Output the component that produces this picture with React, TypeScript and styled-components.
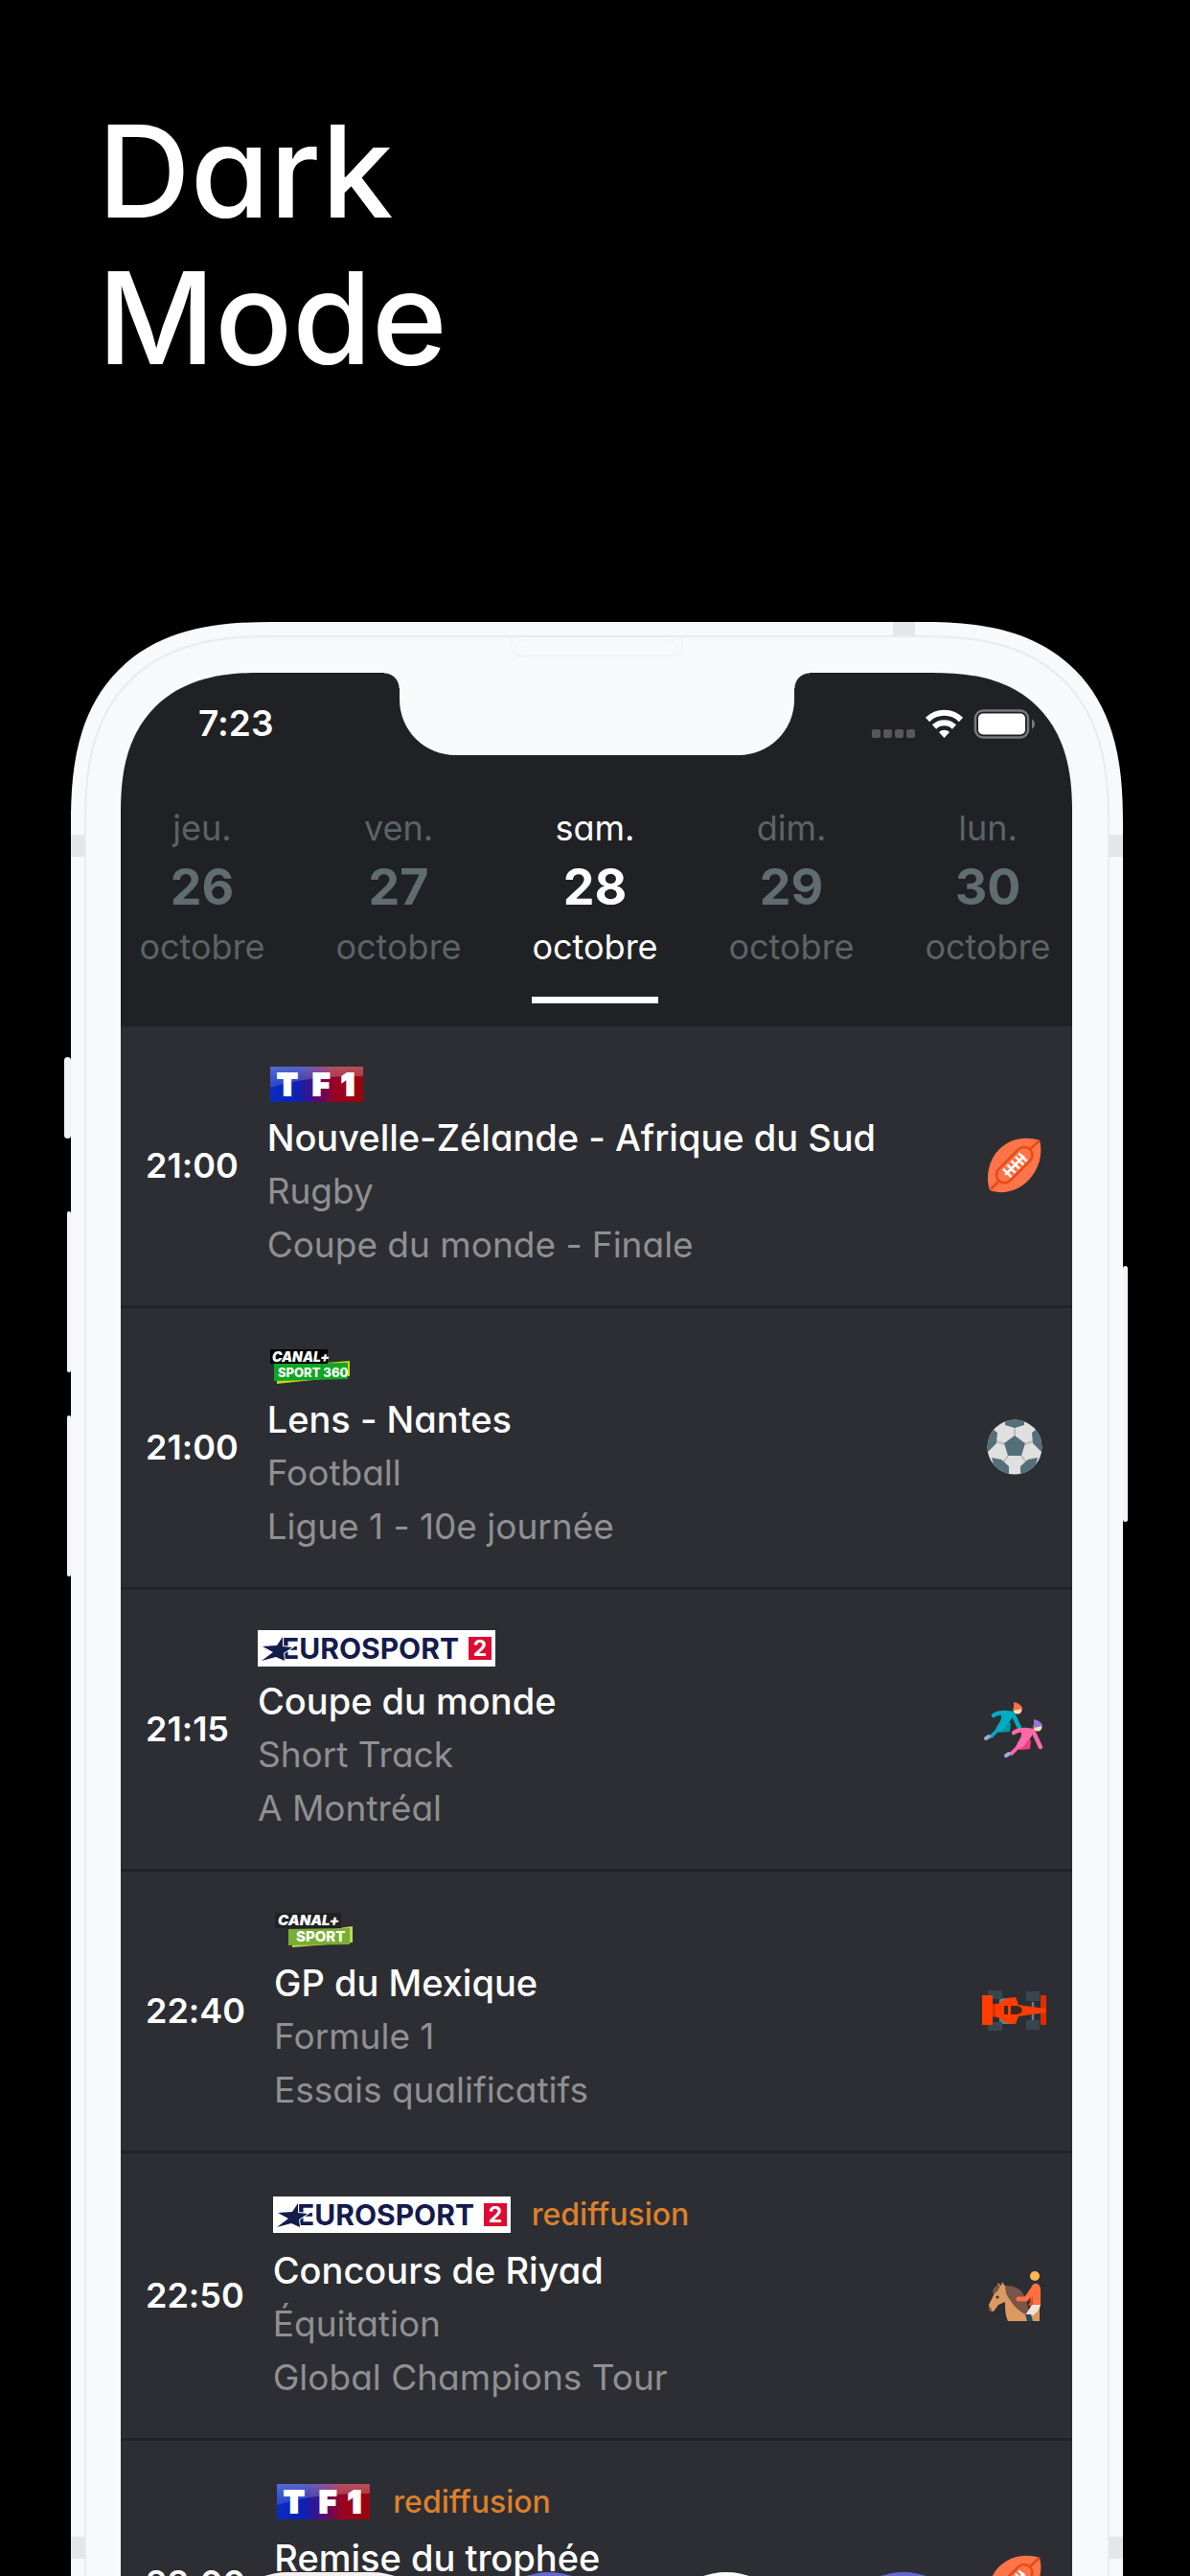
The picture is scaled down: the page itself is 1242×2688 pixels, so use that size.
/*node-modules*/
import React from 'react';
import styled, {createGlobalStyle} from 'styled-components';

type Day = {
    name: string;
    date: number;
    month: string;
}

type Channel = 'tf1' | 'canalSport360' | 'canalSport' | 'eurosport2';
type Sport = 'rugby' | 'football' | 'shortTrack' | 'formula1' | 'riding';

type Broadcast = {
    time: string;
    channel: Channel;
    title: string;
    sport: string;
    details: string;
    icon: Sport;
    isReplay?: boolean;
}

const days: Day[] = [
    {name: 'jeu.', date: 26, month: 'octobre'},
    {name: 'ven.', date: 27, month: 'octobre'},
    {name: 'sam.', date: 28, month: 'octobre'},
    {name: 'dim.', date: 29, month: 'octobre'},
    {name: 'lun.', date: 30, month: 'octobre'},
];

const broadcasts: Broadcast[] = [
    {time: '21:00', channel: 'tf1', title: 'Nouvelle-Zélande - Afrique du Sud', sport: 'Rugby', details: 'Coupe du monde - Finale', icon: 'rugby'},
    {time: '21:00', channel: 'canalSport360', title: 'Lens - Nantes', sport: 'Football', details: 'Ligue 1 - 10e journée', icon: 'football'},
    {time: '21:15', channel: 'eurosport2', title: 'Coupe du monde', sport: 'Short Track', details: 'A Montréal', icon: 'shortTrack'},
    {time: '22:40', channel: 'canalSport', title: 'GP du Mexique', sport: 'Formule 1', details: 'Essais qualificatifs', icon: 'formula1'},
    {time: '22:50', channel: 'eurosport2', title: 'Concours de Riyad', sport: 'Équitation', details: 'Global Champions Tour', icon: 'riding', isReplay: true},
    {time: '23:00', channel: 'tf1', title: 'Remise du trophée', sport: 'Rugby', details: 'Coupe du monde', icon: 'rugby', isReplay: true},
];

const GlobalStyle = createGlobalStyle`
  * {
    box-sizing: border-box;
  }

  body {
    margin: 0;
    background-color: #000000;
    font-family: Inter, "Liberation Sans", sans-serif;
    font-feature-settings: "cv11", "calt" 0;
  }

  h1, h2, p, ul {
    margin: 0;
    padding: 0;
  }
`;

const Page = styled.main`
  height: 100vh;
  overflow: hidden;
`;

const Heading = styled.h1`
  padding: 102px 102px 241px;
  font-weight: 500;
  font-size: 134px;
  line-height: 153px;
  color: #FFFFFF;
`;

const Device = styled.div`
  display: flex;
  padding: 0 65px 0 67px;
`;

const ButtonRail = styled.div<{$side: 'left' | 'right'}>`
  flex: none;
  display: flex;
  flex-direction: column;
  align-items: ${({$side}) => $side === 'left' ? 'flex-end' : 'flex-start'};
  width: ${({$side}) => $side === 'left' ? 7 : 5}px;
`;

const SideButton = styled.div<{$space: number; $length: number; $depth: number}>`
  width: ${({$depth}) => $depth}px;
  height: ${({$length}) => $length}px;
  margin-top: ${({$space}) => $space}px;
  border-radius: 4px;
  background-color: #F3F4F6;
`;

/* the grey marks in the background are the antenna bands of the metal edge */
const Phone = styled.div`
  position: relative;
  flex: 1;
  min-width: 0;
  min-height: 2400px;
  padding: 53px 53px 0 52px;
  border-radius: 176px 176px 0 0;
  background:
    linear-gradient(#E5E6E7, #E5E6E7) right 217px top 0 / 23px 15px no-repeat,
    linear-gradient(#E5E6E7, #E5E6E7) left 0 top 222px / 15px 23px no-repeat,
    linear-gradient(#E5E6E7, #E5E6E7) right 0 top 222px / 15px 23px no-repeat,
    linear-gradient(#E5E6E7, #E5E6E7) left 0 top 1998px / 15px 23px no-repeat,
    linear-gradient(#E5E6E7, #E5E6E7) right 0 top 1998px / 15px 23px no-repeat,
    #F8F9FB;

  @supports (corner-shape: superellipse(1.3)) {
    border-radius: 210px 210px 0 0;
    corner-shape: superellipse(1.35);
  }
`;

const Bezel = styled.div`
  position: absolute;
  inset: 14px 14px 0 14px;
  display: flex;
  justify-content: center;
  align-items: flex-start;
  border: 2px solid #E9EBED;
  border-bottom: 0;
  border-radius: 162px 162px 0 0;

  @supports (corner-shape: superellipse(1.3)) {
    border-radius: 196px 196px 0 0;
    corner-shape: superellipse(1.35);
  }
`;

const Speaker = styled.div`
  width: 180px;
  height: 21px;
  padding: 2px 4px;
  border: 2px solid #F2F3F5;
  border-top: 0;
  border-radius: 0 0 12px 12px;

  &::after {
    content: "";
    display: block;
    height: 15px;
    border: 1px solid #F2F3F5;
    border-radius: 8px;
  }
`;

const Screen = styled.div`
  position: relative;
  overflow: hidden;
  border-radius: 126px 126px 0 0;
  background-color: #202124;

  @supports (corner-shape: superellipse(1.3)) {
    border-radius: 146px 146px 0 0;
    corner-shape: superellipse(1.3);
  }
`;

const StatusBar = styled.div`
  display: grid;
  grid-template-columns: minmax(0, 1fr) 412px minmax(0, 1fr);
  height: 106px;
`;

const StatusSide = styled.div<{$end?: boolean}>`
  display: flex;
  align-items: center;
  justify-content: ${({$end}) => $end ? 'flex-end' : 'flex-start'};
  padding: ${({$end}) => $end ? '0 38px 0 0' : '0 0 0 81px'};
  font-weight: 600;
  font-size: 37px;
  line-height: 44px;
  color: #FFFFFF;

  svg {
    flex: none;
  }
`;

const Notch = styled.div`
  position: relative;
  height: 86px;
  border-radius: 0 0 58px 58px;
  background-color: #F8F9FB;

  &::before, &::after {
    content: "";
    position: absolute;
    top: 0;
    width: 16px;
    height: 16px;
  }

  &::before {
    right: 100%;
    background: radial-gradient(circle at 0 100%, transparent 15px, #F8F9FB 16px);
  }

  &::after {
    left: 100%;
    background: radial-gradient(circle at 100% 100%, transparent 15px, #F8F9FB 16px);
  }
`;

const DayTabs = styled.nav`
  display: flex;
  justify-content: space-between;
  padding: 28px 22px 24px 19px;
`;

const DayTab = styled.button<{$active: boolean}>`
  width: 132px;
  padding: 0 0 24px;
  border: 0;
  border-bottom: 7px solid ${({$active}) => $active ? '#FFFFFF' : 'transparent'};
  background: none;
  font-family: inherit;
  font-feature-settings: inherit;
  font-size: 36px;
  line-height: 56px;
  white-space: nowrap;
  color: ${({$active}) => $active ? '#FFFFFF' : '#5A6467'};

  span, strong {
    display: block;
  }

  strong {
    font-weight: 700;
    font-size: 52px;
    line-height: 68px;
    color: ${({$active}) => $active ? '#FFFFFF' : '#5F6C70'};
  }
`;

const BroadcastList = styled.ul`
  list-style: none;
`;

const BroadcastRow = styled.li`
  display: flex;
  align-items: center;
  gap: 30px;
  padding: 33px 26px 35px;
  background-color: #2D2E33;

  & + & {
    border-top: 3px solid #222327;
  }

  > time {
    font-weight: 600;
    font-size: 36px;
    line-height: 56px;
    color: #FFFFFF;
  }

  > svg {
    flex: none;
  }
`;

const BroadcastInfo = styled.div`
  flex: 1;
  min-width: 0;
  font-size: 37px;
  line-height: 56px;

  h2 {
    font-weight: 500;
    font-size: 38px;
    line-height: 56px;
    color: #FFFFFF;
  }

  p {
    color: #8F9092;
  }
`;

const ChannelLine = styled.div<{$tall: boolean}>`
  display: flex;
  align-items: center;
  gap: 22px;
  height: ${({$tall}) => $tall ? 61 : 55}px;

  svg {
    display: block;
  }

  span {
    font-weight: 500;
    font-size: 32px;
    color: #DD802B;
  }
`;

const QuickFilters = styled.div`
  position: absolute;
  top: 1982px;
  left: 0;
  right: 0;
  display: flex;
  gap: 37px;
  padding-left: 100px;
`;

const QuickFilter = styled.button<{$color: string; $wide?: boolean}>`
  width: ${({$wide}) => $wide ? 236 : 148}px;
  height: 148px;
  border: 0;
  border-radius: 74px;
  background-color: ${({$color}) => $color};
`;

const StatusIcons = () => (
    <svg width="172" height="32" viewBox="0 0 172 32" aria-hidden="true">
        <g fill="#57565B">
            <rect x="1" y="22" width="9" height="9" rx="2"/>
            <rect x="13" y="22" width="9" height="9" rx="2"/>
            <rect x="25" y="22" width="9" height="9" rx="2"/>
            <rect x="37" y="22" width="9" height="9" rx="2"/>
        </g>
        <g fill="none" stroke="#FFFFFF" strokeWidth="6">
            <path d="M59 12a25 25 0 0 1 35 0"/>
            <path d="M66 19.500a15 15 0 0 1 21 0"/>
        </g>
        <path d="M76.500 31l-5.500-6a8 8 0 0 1 11 0z" fill="#FFFFFF"/>
        <rect x="109" y="2.500" width="55" height="28" rx="8" fill="none" stroke="#77787B" strokeWidth="2.500"/>
        <rect x="112" y="5.500" width="49" height="22" rx="5" fill="#FFFFFF"/>
        <path d="M168 11.500c4 2 4 8 0 10z" fill="#77787B"/>
    </svg>
);

const Tf1Logo = () => (
    <svg width="102" height="38" viewBox="0 0 102 38" role="img" aria-label="TF1">
        <defs>
            <linearGradient id="tf1-base">
                <stop offset="0" stopColor="#0A2BC4"/>
                <stop offset=".3" stopColor="#0D22B0"/>
                <stop offset=".5" stopColor="#520C78"/>
                <stop offset=".7" stopColor="#99041F"/>
                <stop offset="1" stopColor="#97050D"/>
            </linearGradient>
            <linearGradient id="tf1-shine" x2="0" y2="1">
                <stop offset="0" stopColor="#FFFFFF" stopOpacity=".3"/>
                <stop offset="1" stopColor="#FFFFFF" stopOpacity=".12"/>
            </linearGradient>
        </defs>
        <rect x="3" width="97" height="37" fill="url(#tf1-base)"/>
        <path d="M3 0h97v10C62 10 30 13 3 22z" fill="url(#tf1-shine)"/>
        <g fill="#FFFFFF" stroke="#FFFFFF" strokeWidth="2" fontWeight="900" fontSize="31" textAnchor="middle">
            <text x="21" y="30">T</text>
            <text x="56" y="30">F</text>
            <text x="84" y="30">1</text>
        </g>
    </svg>
);

const CanalSport360Logo = () => (
    <svg width="88" height="36" viewBox="0 0 88 36" role="img" aria-label="Canal+ Sport 360">
        <path d="M61 14l25-2v16l-76 8v-5z" fill="#C3D70F"/>
        <path d="M7 15l77-1v17L7 33z" fill="#10A624"/>
        <rect x="3" width="60" height="15" fill="#000000"/>
        <text x="5" y="13" fill="#FFFFFF" fontWeight="900" fontStyle="italic" fontSize="14">CANAL+</text>
        <text x="11" y="29" fill="#FFFFFF" fontWeight="800" fontSize="13">SPORT 360</text>
    </svg>
);

const CanalSportLogo = () => (
    <svg width="88" height="38" viewBox="0 0 88 38" role="img" aria-label="Canal+ Sport">
        <path d="M68 17l14-2v17l-63 5v-5z" fill="#C5D65B"/>
        <path d="M15 18l64-1v17l-64 1z" fill="#78AE32"/>
        <rect x="1" y="1" width="69" height="16" fill="#202124"/>
        <text x="4" y="14" fill="#FFFFFF" fontWeight="900" fontStyle="italic" fontSize="15">CANAL+</text>
        <text x="23" y="31" fill="#FFFFFF" fontWeight="800" fontSize="15">SPORT</text>
    </svg>
);

const Eurosport2Logo = () => (
    <svg width="248" height="38" viewBox="0 0 248 38" role="img" aria-label="Eurosport 2">
        <rect width="248" height="38" fill="#FFFFFF"/>
        <text x="25" y="30" fill="#141B4D" fontWeight="700" fontSize="30">EUROSPORT</text>
        <path
            d="M26 7l-6 9-15 1 11 6-12 9 15-4 9 4-1-8 9-6-10-1z"
            fill="#141B4D"
            stroke="#FFFFFF"
            strokeWidth="2"
            paintOrder="stroke"
        />
        <rect x="220" y="7" width="24" height="24" fill="#DE0A33"/>
        <text x="232" y="27" fill="#FFFFFF" fontWeight="700" fontSize="23" textAnchor="middle">2</text>
    </svg>
);

const RugbyIcon = () => (
    <svg width="68" height="68" viewBox="0 0 68 68" role="img" aria-label="Rugby">
        <path d="M8 60C3 46 7 28 18 17S46 3 60 8c4 14-1 31-12 42S22 65 8 60z" fill="#FF7448"/>
        <g stroke="#E64A19" strokeWidth="2.500" fill="none">
            <path d="M9 59l8-8M50 17l10-9"/>
            <rect x="11" y="25" width="46" height="17" rx="8.500" transform="rotate(-45 34 34)"/>
        </g>
        <g stroke="#FFFFFF" strokeWidth="2.500" transform="rotate(-45 34 34)">
            <path d="M20 34h28M23 28v12M29 28v12M35 28v12M41 28v12M46 28v12"/>
        </g>
    </svg>
);

const FootballIcon = () => (
    <svg width="68" height="68" viewBox="0 0 68 68" role="img" aria-label="Football">
        <defs>
            <clipPath id="ball">
                <circle cx="34" cy="34" r="28.500"/>
            </clipPath>
        </defs>
        <circle cx="34" cy="34" r="28.500" fill="#E0E0E0"/>
        <g clipPath="url(#ball)">
            <path d="M34 23V10M23.500 31L12 27M44.500 31L56 27M27 43l-8 11M41 43l8 11" stroke="#BDBDBD" strokeWidth="2"/>
            <path
                d="M34 22l11 8-4 13H27l-4-13zM24 5h20v6l-10 3-10-3zM4 22l8-6 4 3-1 11-9 9-4-2zM64 22l-8-6-4 3 1 11 9 9 4-2zM10 45l10 2 8 7v10H15zM58 45l-10 2-8 7v10h13z"
                fill="#546E7A"
            />
        </g>
    </svg>
);

const Skater = ({suit, shade, hat}: {suit: string; shade: string; hat: string}) => (
    <g>
        <path d="M17 24l7-7 3 6-1 8-12 1z" fill={shade}/>
        <path
            d="M9 14c4-3 8-3 12-3l8 1 8 17"
            fill="none"
            stroke={suit}
            strokeWidth="4.500"
            strokeLinecap="round"
            strokeLinejoin="round"
        />
        <path d="M17 10h11c3 5-1 9-4 12-3 4-5 8-10 9l-7 7-3-2c3-4 6-5 8-9 2-5 4-6 5-10z" fill={suit}/>
        <circle cx="34" cy="8" r="4.500" fill="#FFE0B2"/>
        <path d="M30 9V0c5 1 9 4 9 7z" fill={hat}/>
        <path d="M1 38l3-2" stroke="#9FA8DA" strokeWidth="4" strokeLinecap="round"/>
    </g>
);

const ShortTrackIcon = () => (
    <svg width="68" height="68" viewBox="0 0 68 68" role="img" aria-label="Short Track">
        <g transform="translate(3 6)">
            <Skater suit="#00ACC1" shade="#0097A7" hat="#FF7043"/>
        </g>
        <g transform="translate(24 24)">
            <Skater suit="#FF69A8" shade="#EC407A" hat="#9575CD"/>
        </g>
    </svg>
);

const Formula1Icon = () => (
    <svg width="68" height="68" viewBox="0 0 68 68" role="img" aria-label="Formule 1">
        <path d="M18 21h14v27H18z" fill="#607D8B"/>
        <path d="M53 25v20" stroke="#607D8B" strokeWidth="2.500"/>
        <path d="M6 13h15v9H6zM6 46h15v9H6zM46 14h14v10H46zM46 44h14v10H46z" fill="#37474F"/>
        <path d="M61 18h6v31h-6z" fill="#DD2C00"/>
        <path d="M10 28l6-1 10-6 9-1 3 8 29 4v4l-29 4-3 8-9-1-10-6-6-1z" fill="#FF3D00"/>
        <path d="M0 18h11v31H0z" fill="#FF3D00"/>
        <path d="M11 27h3v13h-3z" fill="#DD2C00"/>
        <path d="M23 29h4v9h-4zM30 29h5c9 0 9 9 0 9h-5z" fill="#3E2723"/>
    </svg>
);

const RidingIcon = () => (
    <svg width="68" height="68" viewBox="0 0 68 68" role="img" aria-label="Équitation">
        <path
            d="M17 25l-1-4 4 3 1-4 4 6c3 6 6 12 12 18l9 6 14-4v15H27c-3-7-3-13-3-20l-7 3-5 7-4-1-1-6 5-10c1-4 2-7 5-9z"
            fill="#DB9A62"
        />
        <path d="M11 30c1-4 4-7 8-6l-3 6-4 3zM24 24c12 0 19 5 22 15l3 13-4 2C37 50 30 42 25 32z" fill="#795548"/>
        <circle cx="16" cy="36" r="1.500" fill="#3E2723"/>
        <path d="M7 46l3 2-1 3-2-1z" fill="#795548"/>
        <path d="M51 27c1-7 9-7 10 0v18H50z" fill="#FF7043"/>
        <path d="M53 28l-7 10h-8" fill="none" stroke="#FF7043" strokeWidth="5" strokeLinecap="round" strokeLinejoin="round"/>
        <path d="M48 45l5-10v10z" fill="#DD4A1F"/>
        <path d="M52 44h9c-1 5-4 8-8 11h-8z" fill="#EFE3D3"/>
        <path d="M45 54h6l2 7h-6z" fill="#1F4A5B"/>
        <circle cx="55" cy="14" r="5" fill="#FFB74D"/>
    </svg>
);

const channelLogos: Record<Channel, React.FC> = {
    tf1: Tf1Logo,
    canalSport360: CanalSport360Logo,
    canalSport: CanalSportLogo,
    eurosport2: Eurosport2Logo,
};

const sportIcons: Record<Sport, React.FC> = {
    rugby: RugbyIcon,
    football: FootballIcon,
    shortTrack: ShortTrackIcon,
    formula1: Formula1Icon,
    riding: RidingIcon,
};

const BroadcastItem = ({broadcast}: {broadcast: Broadcast}) => {
    const Logo = channelLogos[broadcast.channel];
    const SportIcon = sportIcons[broadcast.icon];

    return (
        <BroadcastRow>
            <time>{broadcast.time}</time>
            <BroadcastInfo>
                <ChannelLine $tall={!!broadcast.isReplay}>
                    <Logo/>
                    {broadcast.isReplay && <span>rediffusion</span>}
                </ChannelLine>
                <h2>{broadcast.title}</h2>
                <p>{broadcast.sport}</p>
                <p>{broadcast.details}</p>
            </BroadcastInfo>
            <SportIcon/>
        </BroadcastRow>
    );
};

const App = () => {
    const [activeDate, setActiveDate] = React.useState(28);

    return (
        <Page>
            <GlobalStyle/>
            <Heading>Dark<br/>Mode</Heading>
            <Device>
                <ButtonRail $side="left">
                    <SideButton $space={454} $length={85} $depth={7}/>
                    <SideButton $space={76} $length={168} $depth={4}/>
                    <SideButton $space={45} $length={168} $depth={4}/>
                </ButtonRail>
                <Phone>
                    <Bezel>
                        <Speaker/>
                    </Bezel>
                    <Screen>
                        <StatusBar>
                            <StatusSide>
                                <time>7:23</time>
                            </StatusSide>
                            <Notch/>
                            <StatusSide $end>
                                <StatusIcons/>
                            </StatusSide>
                        </StatusBar>
                        <DayTabs>
                            {days.map((day) => (
                                <DayTab key={day.date} $active={day.date === activeDate} onClick={() => setActiveDate(day.date)}>
                                    <span>{day.name}</span>
                                    <strong>{day.date}</strong>
                                    <span>{day.month}</span>
                                </DayTab>
                            ))}
                        </DayTabs>
                        <BroadcastList>
                            {broadcasts.map((broadcast) => (
                                <BroadcastItem key={broadcast.title} broadcast={broadcast}/>
                            ))}
                        </BroadcastList>
                        <QuickFilters>
                            <QuickFilter $color="#F3F1F0" $wide aria-label="Toutes les chaînes"/>
                            <QuickFilter $color="#6467CF" aria-label="Sports"/>
                            <QuickFilter $color="#FFFFFF" aria-label="Recherche"/>
                            <QuickFilter $color="#6467CF" aria-label="Réglages"/>
                        </QuickFilters>
                    </Screen>
                </Phone>
                <ButtonRail $side="right">
                    <SideButton $space={672} $length={267} $depth={5}/>
                </ButtonRail>
            </Device>
        </Page>
    );
};

export default App;
